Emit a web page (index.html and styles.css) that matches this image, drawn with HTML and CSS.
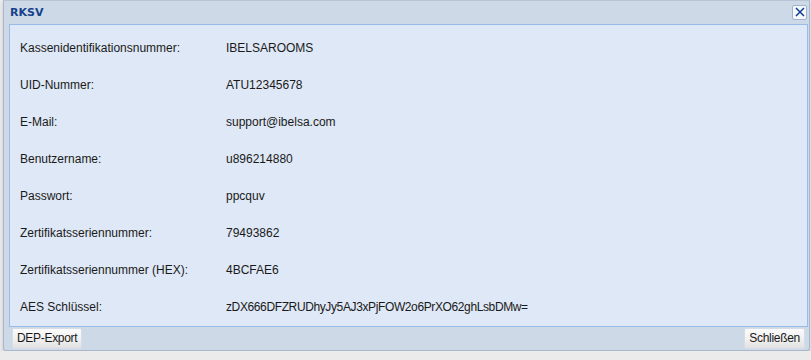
FILE: index.html
```html
<!DOCTYPE html>
<html lang="de">
<head>
  <meta charset="UTF-8" />
  <title>RKSV</title>
  <link rel="stylesheet" href="styles.css">
</head>
<body>

  <div class="window">
    <div class="window-header">
      <span class="window-title">RKSV</span>
      <span class="tool-close">
        <svg width="10" height="10" viewBox="0 0 10 10"><path d="M1 1 L9 9 M9 1 L1 9" stroke="#15428b" stroke-width="1.6"/></svg>
      </span>
    </div>

    <div class="window-body">
      <div class="row"><span class="label">Kassenidentifikationsnummer:</span><span class="value">IBELSAROOMS</span></div>
      <div class="row"><span class="label">UID-Nummer:</span><span class="value">ATU12345678</span></div>
      <div class="row"><span class="label">E-Mail:</span><span class="value">support@ibelsa.com</span></div>
      <div class="row"><span class="label">Benutzername:</span><span class="value">u896214880</span></div>
      <div class="row"><span class="label">Passwort:</span><span class="value">ppcquv</span></div>
      <div class="row"><span class="label">Zertifikatsseriennummer:</span><span class="value">79493862</span></div>
      <div class="row"><span class="label">Zertifikatsseriennummer (HEX):</span><span class="value">4BCFAE6</span></div>
      <div class="row"><span class="label">AES Schlüssel:</span><span class="value key">zDX666DFZRUDhyJy5AJ3xPjFOW2o6PrXO62ghLsbDMw=</span></div>
    </div>

    <div class="window-footer">
      <button class="btn">DEP-Export</button>
      <button class="btn">Schließen</button>
    </div>
  </div>

</body>
</html>
```

FILE: styles.css
```css
body {
  margin: 0;
  background: #ebebeb;
  font-family: "Liberation Sans", Arial, sans-serif;
  font-size: 12px;
  color: #1a1a1a;
}
.window {
  margin-left: 3px;
  width: 805px;
  height: 349px;
  background: #ced9e7;
  border: 1px solid #a9b8cc;
  border-top-color: #b8c4d4;
  border-radius: 0 0 3px 3px;
  display: flex;
  flex-direction: column;
  box-shadow: 0 2px 4px rgba(0,0,0,0.15);
}
.window-header {
  height: 25px;
  display: flex;
  align-items: center;
  justify-content: space-between;
  padding: 0 2px 0 6px;
}
.window-title {
  font-family: "DejaVu Sans", sans-serif;
  font-weight: bold;
  font-size: 11px;
  color: #15428b;
}
.tool-close {
  width: 13px;
  height: 13px;
  background: #f4f7fb;
  border: 1px solid #9fb3cc;
  border-radius: 2px;
  display: flex;
  align-items: center;
  justify-content: center;
}
.window-body {
  flex: 1;
  margin: 0 1px 0 5px;
  background: #dfe8f6;
  border: 1px solid #99bbe8;
  padding-top: 5px;
}
.row {
  display: flex;
  height: 37px;
  align-items: center;
  padding-left: 10px;
}
.label {
  width: 206px;
}
.key {
  letter-spacing: -0.38px;
}
.window-footer {
  height: 26px;
  display: flex;
  justify-content: space-between;
  align-items: center;
  padding: 0 4px 0 8px;
}
.btn {
  font-family: "Liberation Sans", Arial, sans-serif;
  font-size: 12px;
  color: #1a1a1a;
  height: 21px;
  padding: 0 4px;
  letter-spacing: -0.3px;
  border: 1px solid #d6dde6;
  border-radius: 2px;
  background: linear-gradient(#fbfbfb, #f0f0f0 55%, #e1e1e1);
}
```
